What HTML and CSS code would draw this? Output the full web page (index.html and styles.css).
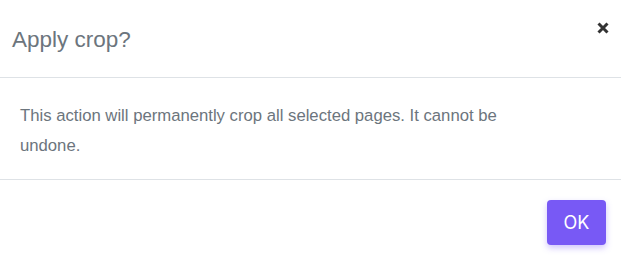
FILE: index.html
```html
<!DOCTYPE html>
<html lang="en">
<head>
  <meta charset="UTF-8" />
  <meta name="viewport" content="width=device-width, initial-scale=1.0" />
  <title>Apply crop</title>
  <link rel="stylesheet" href="styles.css">
</head>
<body>
  <div class="modal">
    <div class="modal-header">
      <h2 class="modal-title">Apply crop?</h2>
      <button class="close" type="button" aria-label="Close">
        <svg width="12" height="12" viewBox="0 0 12 12">
          <path d="M1.5 1.5 L10.5 10.5 M10.5 1.5 L1.5 10.5" stroke="#333" stroke-width="3" stroke-linecap="butt" />
        </svg>
      </button>
    </div>

    <div class="modal-body">
      <p>This action will permanently crop all selected pages. It cannot be undone.</p>
    </div>

    <div class="modal-footer">
      <button class="btn-ok" type="button">OK</button>
    </div>
  </div>
</body>
</html>
```

FILE: styles.css
```css
body {
  margin: 0;
  padding: 0;
  background-color: #fff;
  font-family: "Liberation Sans", Arial, sans-serif;
}

.modal {
  width: 621px;
  height: 265px;
  background-color: #fff;
}

.modal-header {
  display: flex;
  justify-content: space-between;
  align-items: flex-start;
  height: 78px;
  padding: 0 12px;
  border-bottom: 1px solid #dee2e6;
  box-sizing: border-box;
}

.modal-title {
  margin: 27px 0 0;
  font-size: 22.5px;
  font-weight: normal;
  color: #6c757d;
}

.close {
  margin-top: 22px;
  padding: 0;
  border: none;
  background: none;
  cursor: pointer;
}

.modal-body {
  height: 102px;
  padding: 0 70px 0 20px;
  border-bottom: 1px solid #dee2e6;
  box-sizing: border-box;
}

.modal-body p {
  margin: 0;
  padding-top: 23px;
  font-size: 16.7px;
  line-height: 30px;
  color: #6c757d;
}

.modal-footer {
  display: flex;
  justify-content: flex-end;
  padding: 20px 15px 0;
}

.btn-ok {
  width: 59px;
  height: 45px;
  border: none;
  border-radius: 4px;
  background-color: #7859f5;
  color: #fff;
  font-family: Inter, sans-serif;
  font-size: 18px;
  box-shadow: 0 3px 6px rgba(120, 89, 245, 0.35);
  cursor: pointer;
}
```
